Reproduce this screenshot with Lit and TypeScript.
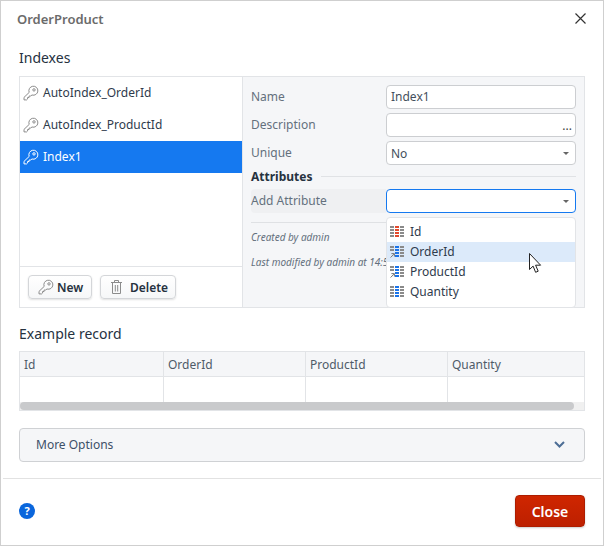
import { LitElement, html, css, svg } from 'lit';
import { customElement } from 'lit/decorators.js';

const KEY = svg`<path d="M6.2 7.4A4.5 4.5 0 1 1 9 10L7.6 11H6.1v1.5H4.6V14l-.9.9H1v-2.5z" fill="none" stroke="currentColor" stroke-width="1" stroke-linejoin="round"/><circle cx="11" cy="4.9" r="1.2" fill="none" stroke="currentColor" stroke-width="1"/>`;

const keyIcon = html`<svg class="key" width="16" height="17" viewBox="0 0 16 17">${KEY}</svg>`;

// small table glyph: 3 columns x 4 rows, middle column tinted, optional link arrow
function gridIcon(tint: string, arrow: boolean) {
  const cells = [];
  for (let r = 0; r < 4; r++) {
    for (let c = 0; c < 3; c++) {
      if (arrow && r >= 2 && c === 0) continue;
      cells.push(svg`<rect x=${c * 5} y=${r * 3} width="4" height="2" fill=${c === 1 ? tint : '#8a8a8a'}/>`);
    }
  }
  return html`<svg class="grid" width="14" height="12" viewBox="0 0 14 12">
    ${cells}
    ${arrow ? svg`<path d="M.6 11.5 4 8.1M1.4 7.6h3v3" fill="none" stroke="#777" stroke-width="1"/>` : ''}
  </svg>`;
}

const attributes = [
  { name: 'Id', icon: gridIcon('#e2492c', false), active: false },
  { name: 'OrderId', icon: gridIcon('#1a73e8', true), active: true },
  { name: 'ProductId', icon: gridIcon('#1a73e8', true), active: false },
  { name: 'Quantity', icon: gridIcon('#1a73e8', false), active: false },
];

@customElement('app-root')
export class AppRoot extends LitElement {
  static styles = css`
    :host {
      display: block;
      width: 604px;
      height: 546px;
      font-family: 'Noto Sans', sans-serif;
      font-size: 12px;
      color: #2f3b4c;
      overflow: hidden;
    }

    .dialog {
      position: relative;
      box-sizing: border-box;
      width: 604px;
      height: 546px;
      background: #fff;
      border: 1px solid #cfcfcf;
      display: flex;
      flex-direction: column;
    }

    .title-bar {
      display: flex;
      align-items: center;
      justify-content: space-between;
      height: 36px;
      padding: 0 17px 0 16px;
      flex: none;
    }

    .title {
      font-size: 13px;
      font-weight: 600;
      color: #6b6b6b;
    }

    .close-x {
      display: block;
      margin-top: -2px;
    }

    .body {
      flex: 1;
      padding: 0 18px;
      display: flex;
      flex-direction: column;
    }

    h2 {
      margin: 0;
      font-size: 14px;
      font-weight: 400;
      line-height: 20px;
      color: #26323f;
    }

    .indexes-h {
      margin-top: 11px;
      margin-bottom: 8px;
    }

    .panel {
      position: relative;
      box-sizing: border-box;
      height: 232px;
      border: 1px solid #e2e4e7;
      display: flex;
    }

    .list {
      box-sizing: border-box;
      width: 223px;
      border-right: 1px solid #e2e4e7;
      display: flex;
      flex-direction: column;
      flex: none;
    }

    .rows {
      flex: 1;
    }

    .row {
      box-sizing: border-box;
      display: flex;
      align-items: center;
      height: 32px;
      padding: 0 0 2px 3px;
      gap: 4px;
      color: #2f3b4c;
    }

    .row .key {
      color: #8c8c8c;
      margin-top: 2px;
    }

    .row.selected {
      background: #1579f0;
      color: #fff;
    }

    .row.selected .key {
      color: #fff;
    }

    .list-actions {
      box-sizing: border-box;
      height: 41px;
      border-top: 1px solid #e2e4e7;
      display: flex;
      align-items: flex-start;
      gap: 8px;
      padding: 8px 0 0 8px;
    }

    .btn {
      box-sizing: border-box;
      height: 24px;
      display: flex;
      align-items: center;
      border: 1px solid #d4d6d9;
      border-radius: 4px;
      background: linear-gradient(#fff, #f6f7f8);
      box-shadow: 0 1px 2px rgba(0, 0, 0, 0.12);
      font-weight: 600;
      color: #26323f;
      font-size: 12px;
    }

    .btn.new {
      width: 64px;
      padding-left: 9px;
      gap: 3px;
    }

    .btn.new .key {
      color: #8c8c8c;
    }

    .btn.delete {
      width: 76px;
      padding-left: 10px;
      gap: 8px;
    }

    .form {
      flex: 1;
      background: #f5f6f8;
      padding: 8px 8px 0 8px;
    }

    .field {
      display: flex;
      align-items: center;
      height: 24px;
      margin-bottom: 4px;
    }

    .label {
      box-sizing: border-box;
      width: 135px;
      flex: none;
      color: #64707d;
      padding-bottom: 2px;
    }

    .input {
      position: relative;
      box-sizing: border-box;
      flex: 1;
      height: 24px;
      background: #fff;
      border: 1px solid #ccced1;
      border-radius: 4px;
      padding-left: 4px;
      line-height: 21px;
      color: #444f5c;
    }

    .input.select {
      line-height: 23px;
    }

    .input.focus {
      border-color: #1579f0;
    }

    .caret {
      position: absolute;
      right: 6px;
      top: 10px;
      width: 0;
      height: 0;
      border-left: 3px solid transparent;
      border-right: 3px solid transparent;
      border-top: 3px solid #666;
    }

    .dots {
      position: absolute;
      right: 3px;
      top: 1px;
      font-size: 12px;
      color: #444;
    }

    .section {
      display: flex;
      align-items: center;
      gap: 9px;
      height: 18px;
      margin-top: -2px;
      margin-bottom: 4px;
      font-weight: 700;
      color: #26323f;
    }

    .section .line {
      flex: 1;
      height: 1px;
      background: #e0e2e5;
    }

    .add-label {
      align-self: stretch;
      line-height: 24px;
      padding-bottom: 0;
      background: #eff0f2;
      border-radius: 4px 0 0 4px;
    }

    .sep {
      height: 1px;
      width: 135px;
      background: #dfe1e4;
      margin-top: 9px;
    }

    .meta {
      font-style: italic;
      font-size: 10px;
      color: #64707d;
      white-space: nowrap;
      line-height: 14px;
    }

    .meta.first {
      margin-top: 7px;
    }

    .meta.second {
      margin-top: 11px;
    }

    .dropdown {
      position: absolute;
      left: 366px;
      top: 140px;
      width: 190px;
      height: 91px;
      box-sizing: border-box;
      background: #fff;
      border: 1px solid #e2e4e7;
      border-radius: 4px;
      padding-top: 4px;
      overflow: hidden;
    }

    .option {
      box-sizing: border-box;
      display: flex;
      align-items: center;
      height: 20px;
      padding: 0 0 2px 3px;
      gap: 6px;
      color: #2f3b4c;
    }

    .option .grid {
      margin-top: 2px;
    }

    .option.active {
      background: #dceafa;
    }

    .cursor {
      position: absolute;
      left: 528px;
      top: 252px;
    }

    .record-h {
      margin-top: 16px;
      margin-bottom: 7px;
    }

    .table {
      position: relative;
      box-sizing: border-box;
      height: 60px;
      border: 1px solid #e2e4e7;
    }

    .thead, .tbody {
      display: grid;
      grid-template-columns: 144px 142px 142px 1fr;
    }

    .thead {
      height: 25px;
      background: #f5f6f8;
      border-bottom: 1px solid #e2e4e7;
      box-sizing: border-box;
    }

    .thead div {
      padding-left: 4px;
      line-height: 26px;
      color: #4f5b68;
      border-right: 1px solid #e2e4e7;
    }

    .thead div:last-child, .tbody div:last-child {
      border-right: 0;
    }

    .tbody {
      height: 25px;
    }

    .tbody div {
      border-right: 1px solid #e2e4e7;
    }

    .track {
      height: 8px;
      background: #f0f0f0;
    }

    .thumb {
      width: 554px;
      height: 8px;
      border-radius: 4px;
      background: #c9cacc;
    }

    .more {
      box-sizing: border-box;
      height: 34px;
      margin-top: 17px;
      border: 1px solid #cfd1d4;
      border-radius: 4px;
      background: #f5f6f8;
      display: flex;
      align-items: center;
      justify-content: space-between;
      padding: 0 19px 2px 16px;
      color: #3d5068;
    }

    .footer {
      flex: none;
      height: 67px;
      margin: 0 2px;
      border-top: 1px solid #e2e2e2;
      display: flex;
      align-items: center;
      justify-content: space-between;
      padding: 0 16px 2px 16px;
      box-sizing: border-box;
    }

    .help {
      width: 16px;
      height: 16px;
      border-radius: 50%;
      background: #0a66dc;
      color: #fff;
      font-weight: 700;
      font-size: 11px;
      line-height: 16px;
      text-align: center;
    }

    .close {
      box-sizing: border-box;
      width: 70px;
      height: 32px;
      border: 1px solid #ad1d00;
      border-radius: 4px;
      background: linear-gradient(#cf2600, #bd2000);
      box-shadow: 0 1px 2px rgba(0, 0, 0, 0.2);
      color: #fff;
      font-weight: 600;
      font-size: 14px;
      display: flex;
      align-items: center;
      justify-content: center;
    }
  `;

  render() {
    return html`
      <div class="dialog">
        <div class="title-bar">
          <span class="title">OrderProduct</span>
          <svg class="close-x" width="11" height="11" viewBox="0 0 11 11">
            <path d="M.5.5l10 10M10.5.5l-10 10" stroke="#333" stroke-width="1.2" fill="none" />
          </svg>
        </div>
        <div class="body">
          <h2 class="indexes-h">Indexes</h2>
          <div class="panel">
            <div class="list">
              <div class="rows">
                <div class="row">${keyIcon}AutoIndex_OrderId</div>
                <div class="row">${keyIcon}AutoIndex_ProductId</div>
                <div class="row selected">${keyIcon}Index1</div>
              </div>
              <div class="list-actions">
                <div class="btn new">${keyIcon}New</div>
                <div class="btn delete">
                  <svg width="11" height="14" viewBox="0 0 11 14">
                    <path d="M0 2.5h11M3.5 2.5V.5h4v2M1.5 2.5v11h8v-11M4.3 5v6.5M6.7 5v6.5" fill="none" stroke="#8c8c8c" stroke-width="1" />
                  </svg>
                  Delete
                </div>
              </div>
            </div>
            <div class="form">
              <div class="field">
                <span class="label">Name</span>
                <div class="input">Index1</div>
              </div>
              <div class="field">
                <span class="label">Description</span>
                <div class="input"><span class="dots">...</span></div>
              </div>
              <div class="field">
                <span class="label">Unique</span>
                <div class="input select">No<span class="caret"></span></div>
              </div>
              <div class="section">Attributes<span class="line"></span></div>
              <div class="field">
                <span class="label add-label">Add Attribute</span>
                <div class="input focus"><span class="caret"></span></div>
              </div>
              <div class="sep"></div>
              <div class="meta first">Created by admin</div>
              <div class="meta second">Last modified by admin at 14:55</div>
            </div>
            <div class="dropdown">
              ${attributes.map(
                (a) => html`<div class="option ${a.active ? 'active' : ''}">${a.icon}${a.name}</div>`,
              )}
            </div>
          </div>
          <h2 class="record-h">Example record</h2>
          <div class="table">
            <div class="thead">
              <div>Id</div>
              <div>OrderId</div>
              <div>ProductId</div>
              <div>Quantity</div>
            </div>
            <div class="tbody"><div></div><div></div><div></div><div></div></div>
            <div class="track"><div class="thumb"></div></div>
          </div>
          <div class="more">
            More Options
            <svg width="11" height="7" viewBox="0 0 11 7">
              <path d="M1 1l4.5 4.5L10 1" fill="none" stroke="#4d6e96" stroke-width="2" />
            </svg>
          </div>
        </div>
        <div class="footer">
          <div class="help">?</div>
          <div class="close">Close</div>
        </div>
        <svg class="cursor" width="14" height="22" viewBox="0 0 14 22">
          <path d="M.5.5v16l3.6-3.4 2.5 6.2 2.6-1.1-2.6-6h5z" fill="#fff" stroke="#222" stroke-width="1" stroke-linejoin="round" />
        </svg>
      </div>
    `;
  }
}
